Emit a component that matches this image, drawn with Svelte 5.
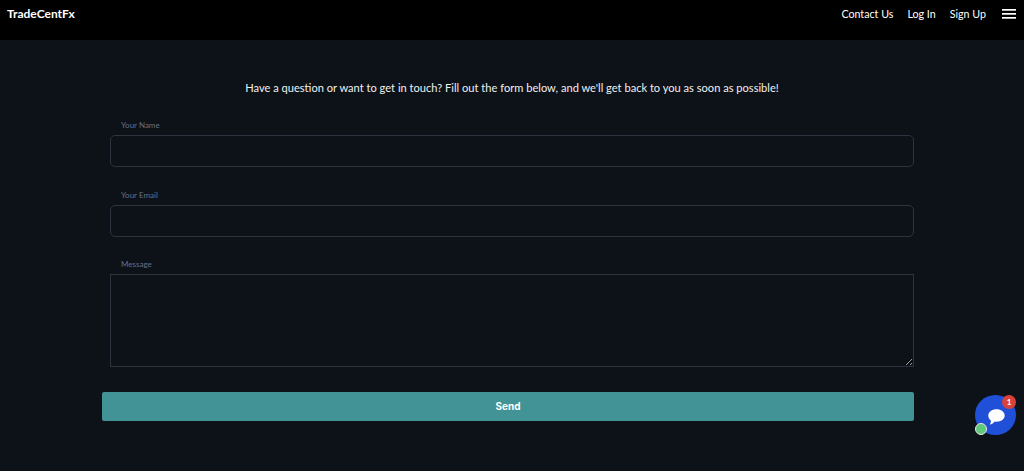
<script>
  const fields = [
    { label: 'Your Name', type: 'input' },
    { label: 'Your Email', type: 'input' }
  ];
</script>

<div class="page">
  <header class="bar">
    <span class="brand">TradeCentFx</span>
    <nav class="nav">
      <span>Contact Us</span>
      <span>Log In</span>
      <span>Sign Up</span>
      <svg class="burger" width="14" height="10" viewBox="0 0 14 10" aria-hidden="true">
        <rect x="0" y="0" width="14" height="1.700" fill="#fff" />
        <rect x="0" y="4" width="14" height="1.700" fill="#fff" />
        <rect x="0" y="8" width="14" height="1.700" fill="#fff" />
      </svg>
    </nav>
  </header>

  <main class="main">
    <p class="intro">Have a question or want to get in touch? Fill out the form below, and we'll get back to you as soon as possible!</p>
    <form class="form">
      {#each fields as f}
        <div class="field">
          <label class="label">{f.label}<input class="control" /></label>
        </div>
      {/each}
      <div class="field">
        <label class="label">Message<textarea class="control area"></textarea></label>
      </div>
      <button type="button" class="send">Send</button>
    </form>
  </main>

  <div class="chat">
    <svg width="17" height="16" viewBox="0 0 17 16" aria-hidden="true">
      <path d="M8.500.3c4.500 0 8.200 2.700 8.200 6.200s-3.700 6.200-8.200 6.200c-.7 0-1.300-.1-1.900-.2C5.300 14.300 3.500 15.400 1.600 15.700c.9-1.100 1.300-2.400 1.300-4.300C1.200 10.300.3 8.500.3 6.500.3 3 4 .3 8.500.3z" fill="#fff" />
    </svg>
    <span class="badge">1</span>
    <span class="online"></span>
  </div>
</div>

<style>
  :global(body) {
    margin: 0;
    background: #0d1219;
  }
  .page {
    position: relative;
    height: 471px;
    overflow: hidden;
    background: #0d1219;
    font-family: Lato, "Liberation Sans", sans-serif;
    color: #e8e8e8;
  }
  .bar {
    height: 40px;
    box-sizing: border-box;
    padding: 0 8px 0 7px;
    background: #000;
    display: flex;
    align-items: flex-start;
    justify-content: space-between;
  }
  .brand {
    margin-top: 6px;
    font-size: 12px;
    line-height: 16px;
    font-weight: 700;
    color: #fff;
  }
  .nav {
    display: flex;
    align-items: center;
    height: 27px;
    gap: 14px;
    font-size: 10.7px;
    color: #fff;
  }
  .burger {
    margin-left: 2px;
    margin-top: 1px;
  }
  .main {
    padding: 40px 110px 0 102px;
  }
  .intro {
    margin: 0 0 24px;
    font-size: 11.1px;
    line-height: 16px;
    text-align: center;
    color: #f0f0f0;
    padding-left: 8px;
  }
  .form {
    display: flex;
    flex-direction: column;
  }
  .field {
    padding-left: 8px;
    margin-bottom: 22px;
  }
  .field:first-child {
    margin-bottom: 23px;
  }
  .label {
    display: block;
    font-size: 8px;
    line-height: 11px;
    color: #65718a;
    text-indent: 11px;
  }
  .control {
    display: block;
    box-sizing: border-box;
    width: 100%;
    height: 32px;
    margin-top: 4px;
    background: transparent;
    border: 1px solid #2e343f;
    border-radius: 5px;
    outline: none;
    padding: 0;
  }
  .area {
    height: 93px;
    border-radius: 0;
    resize: vertical;
    color-scheme: dark;
  }
  .send {
    margin-top: 3px;
    height: 29px;
    border: none;
    border-radius: 2px;
    background: #419396;
    color: #fff;
    font-family: Inter, "Liberation Sans", sans-serif;
    font-size: 10px;
    font-weight: 700;
    padding: 0 0 2px;
  }
  .chat {
    position: absolute;
    left: 975px;
    top: 395px;
    width: 41px;
    height: 40px;
    border-radius: 50%;
    background: #2050d8;
    display: flex;
    align-items: center;
    justify-content: center;
  }
  .chat svg {
    margin-top: 3px;
    margin-left: 1px;
  }
  .badge {
    position: absolute;
    right: 0;
    top: 0;
    width: 14px;
    height: 14px;
    border-radius: 50%;
    background: #d9413b;
    color: #fff;
    font-size: 8px;
    font-weight: 700;
    line-height: 14px;
    text-align: center;
  }
  .online {
    position: absolute;
    left: 0;
    bottom: 0;
    box-sizing: border-box;
    width: 12px;
    height: 12px;
    border-radius: 50%;
    background: #5fc87a;
    border: 1.5px solid #e8e8e8;
  }
</style>
